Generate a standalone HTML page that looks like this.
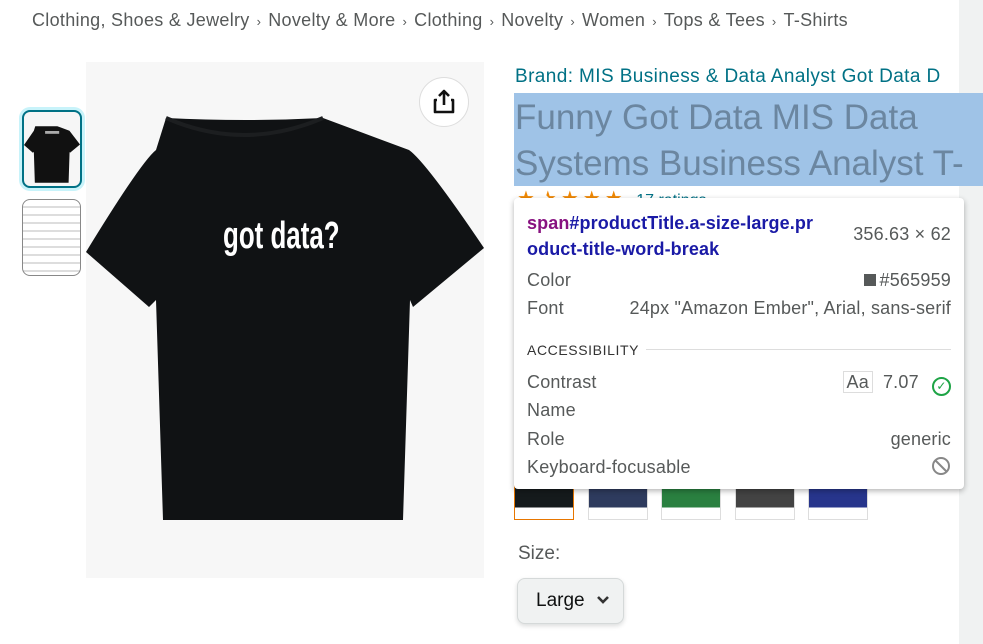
<!DOCTYPE html>
<html><head><style>
body{margin:0;width:983px;height:644px;background:#fff;font-family:"Liberation Sans",Arial,sans-serif;position:relative;overflow:hidden;color:#0f1111}
.a{position:absolute}
.bc{left:32px;top:10px;font-size:18px;color:#565959;white-space:nowrap;letter-spacing:.3px}
.bc span{margin:0 7px;font-size:13px}
.tt{font-size:18px;color:#565959;letter-spacing:.2px}
</style></head><body>
<div class="a" style="left:959px;top:0;width:24px;height:644px;background:#f0f2f2"></div>
<div class="a bc">Clothing, Shoes &amp; Jewelry<span>›</span>Novelty &amp; More<span>›</span>Clothing<span>›</span>Novelty<span>›</span>Women<span>›</span>Tops &amp; Tees<span>›</span>T-Shirts</div>

<div class="a" style="left:22px;top:110px;width:56px;height:74px;border:2px solid #007185;border-radius:8px;box-shadow:0 0 0 3px #c8f3fa;background:#f6f6f6;overflow:hidden">
<svg width="56" height="74" viewBox="0 -40 398 516"><path d="M80 56 L237 56 L323 88 L398 186 L327 245 L324 238 L317 458 L77 458 L70 238 L63 245 L0 190 L70 88Z" fill="#111"/><rect x="150" y="90" width="100" height="20" fill="#aaa"/></svg></div>
<div class="a" style="left:22px;top:199px;width:57px;height:75px;border:1px solid #888;border-radius:8px;background:repeating-linear-gradient(#fff 0 6px,#ddd 6px 8px)"></div>

<div class="a" style="left:86px;top:62px;width:398px;height:516px;background:#f7f7f7">
<svg width="398" height="516" viewBox="0 0 398 516" style="position:absolute;left:0;top:0">
<path d="M80 56 Q160 60 237 56 L323 88 Q340 100 398 186 L327 245 L324 238 L317 458 L77 458 L70 238 L63 245 L0 190 Q55 100 70 88Z" fill="#101214"/>
<path d="M80 56 Q158 90 237 56" stroke="#1c1e20" stroke-width="4" fill="none"/>
<text x="0" y="0" fill="#fff" font-size="36" font-weight="bold" font-family="Liberation Sans,sans-serif" transform="translate(137,186) scale(0.72,1.05)">got data?</text>
</svg>
<div class="a" style="left:333px;top:15px;width:48px;height:48px;border-radius:50%;background:#fff;border:1px solid #ddd">
<svg width="48" height="48" viewBox="0 0 48 48"><path d="M24 13v14M19 18l5-5 5 5M17 22h-2v12h18V22h-2" stroke="#111" stroke-width="2.6" fill="none" stroke-linejoin="round"/></svg></div>
</div>

<div class="a" style="left:515px;top:66px;font-size:19px;color:#007185;white-space:nowrap;letter-spacing:.4px">Brand: MIS Business &amp; Data Analyst Got Data D</div>
<div class="a" style="left:514px;top:93px;width:469px;height:93px;background:#9fc3e7"></div>
<div class="a" style="left:515px;top:95px;font-size:35px;line-height:46px;color:#6b86a0;white-space:nowrap">Funny Got Data MIS Data<br>Systems Business Analyst T-</div>
<div class="a" style="left:517px;top:186px;font-size:20px;color:#f08804;letter-spacing:4px">★★★★★ <span style="color:#007185;font-size:16px;letter-spacing:0">17 ratings</span></div>

<div class="a" style="left:588px;top:480px;width:58px;height:38px;border:1px solid #ddd;background:linear-gradient(#2e3b5e 0 70%,#fff 70%)"></div>
<div class="a" style="left:514px;top:480px;width:58px;height:38px;border:1px solid #e77600;background:linear-gradient(#151a1c 0 70%,#fff 70%)"></div>
<div class="a" style="left:661px;top:480px;width:58px;height:38px;border:1px solid #ddd;background:linear-gradient(#2a8040 0 70%,#fff 70%)"></div>
<div class="a" style="left:735px;top:480px;width:58px;height:38px;border:1px solid #ddd;background:linear-gradient(#434343 0 70%,#fff 70%)"></div>
<div class="a" style="left:808px;top:480px;width:58px;height:38px;border:1px solid #ddd;background:linear-gradient(#27358c 0 70%,#fff 70%)"></div>

<div class="a" style="left:518px;top:543px;font-size:19px;color:#565959">Size:</div>
<div class="a" style="left:517px;top:578px;width:105px;height:44px;border:1px solid #d5d9d9;border-radius:8px;background:#f0f2f2;box-shadow:0 2px 5px rgba(15,17,17,.15)">
<span class="a" style="left:18px;top:11px;font-size:19px">Large</span>
<svg class="a" style="left:78px;top:15px" width="14" height="12" viewBox="0 0 14 12"><path d="M2 3l5 5 5-5" stroke="#333" stroke-width="2.6" fill="none"/></svg></div>

<div class="a" style="left:532px;top:190px;width:0;height:0;border-left:9px solid transparent;border-right:9px solid transparent;border-bottom:9px solid #fff"></div>
<div class="a" style="left:514px;top:198px;width:450px;height:291px;background:#fff;border-radius:4px;box-shadow:0 2px 6px rgba(0,0,0,.3)">
<div class="a" style="left:13px;top:12px;font-size:18px;font-weight:bold;color:#1a1aa6;line-height:26px;width:320px;letter-spacing:.1px"><span style="color:#881280">span</span>#productTitle.a-size-large.pr<br>oduct-title-word-break</div>
<div class="a tt" style="right:13px;top:26px">356.63 × 62</div>
<div class="a tt" style="left:13px;top:72px">Color</div>
<div class="a tt" style="right:13px;top:72px"><span style="display:inline-block;width:12px;height:12px;background:#565959;margin-right:4px"></span>#565959</div>
<div class="a tt" style="left:13px;top:100px">Font</div>
<div class="a tt" style="right:13px;top:100px">24px "Amazon Ember", Arial, sans-serif</div>
<div class="a" style="left:13px;top:144px;font-size:14px;color:#333;letter-spacing:.6px">ACCESSIBILITY</div>
<div class="a" style="left:132px;top:151px;width:305px;height:1px;background:#ddd"></div>
<div class="a tt" style="left:13px;top:174px">Contrast</div>
<div class="a tt" style="right:13px;top:174px"><span style="border:1px solid #ddd;padding:0 3px;margin-right:10px">Aa</span>7.07 <span style="display:inline-block;width:15px;height:15px;border:2px solid #1ea446;border-radius:50%;vertical-align:-2px;margin-left:8px;color:#1ea446;font-size:12px;line-height:15px;text-align:center">✓</span></div>
<div class="a tt" style="left:13px;top:202px">Name</div>
<div class="a tt" style="left:13px;top:231px">Role</div>
<div class="a tt" style="right:13px;top:231px">generic</div>
<div class="a tt" style="left:13px;top:259px">Keyboard-focusable</div>
<svg class="a" style="right:13px;top:258px" width="20" height="20" viewBox="0 0 20 20"><circle cx="10" cy="10" r="8" stroke="#888" stroke-width="2" fill="none"/><path d="M4.5 4.5l11 11" stroke="#888" stroke-width="2"/></svg>
</div>
</body></html>
